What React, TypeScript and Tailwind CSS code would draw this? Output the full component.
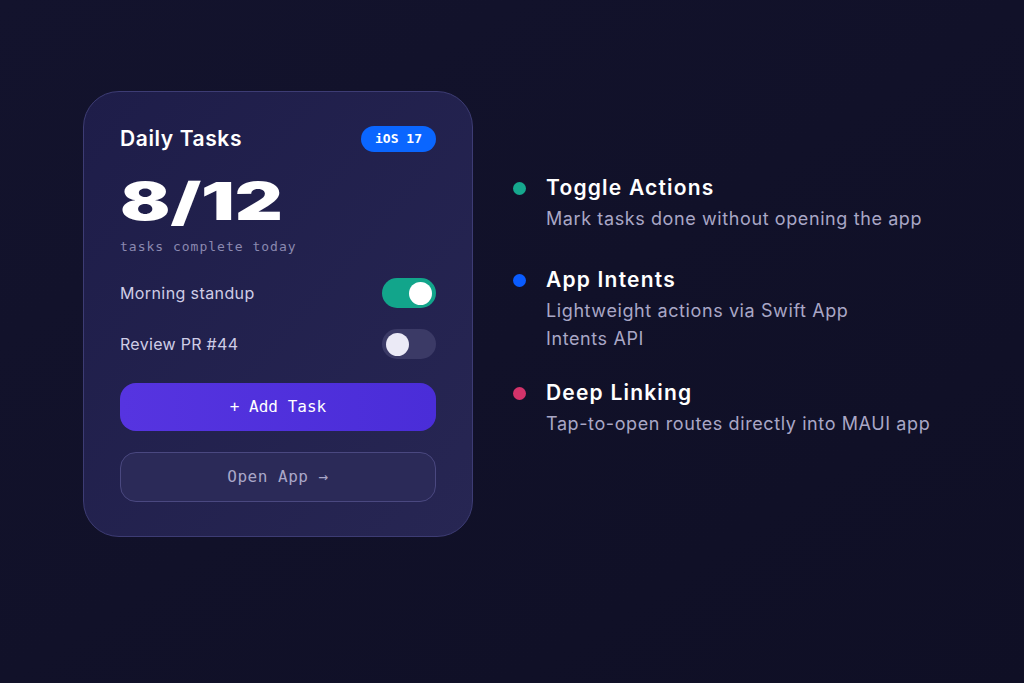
import React from "react";

const sans = "font-['Inter','Lato',sans-serif]";
const mono = "font-['DejaVu_Sans_Mono','Liberation_Mono',monospace]";

function Toggle({ on }: { on: boolean }) {
  return (
    <div
      className={`flex h-[30px] w-[54px] items-center rounded-full px-[4px] ${
        on ? "justify-end bg-[#12a58b]" : "justify-start bg-[#3b3a66]"
      }`}
    >
      <div className={`h-[23px] w-[23px] rounded-full ${on ? "bg-white" : "bg-[#ebeaf6]"}`} />
    </div>
  );
}

function Feature({
  color,
  title,
  children,
}: {
  color: string;
  title: string;
  children: React.ReactNode;
}) {
  return (
    <div className="flex flex-col">
      <div className="flex h-[30px] items-center gap-[20px]">
        <div className={`h-[13px] w-[13px] rounded-full ${color}`} />
        <div className={`${sans} text-[21px] font-semibold leading-[30px] tracking-[1.2px] text-white`}>{title}</div>
      </div>
      <div className={`${sans} mt-[2px] pl-[33px] text-[18px] leading-[28px] tracking-[0.6px] text-[#a9a7c6]`}>
        {children}
      </div>
    </div>
  );
}

export default function App() {
  return (
    <div className="flex h-[683px] w-[1024px] items-start bg-gradient-to-br from-[#13132d] to-[#0f0f25] pl-[83px] pt-[91px]">
      <div className="flex w-[390px] flex-col rounded-[36px] border border-[#3d3c74] bg-gradient-to-br from-[#1e1d49] to-[#272653] px-[36px] pb-[34px] pt-[31px]">
        <div className="flex items-center justify-between">
          <div className={`${sans} text-[21px] font-semibold tracking-[0.6px] text-white`}>Daily Tasks</div>
          <div className={`${mono} flex h-[26px] w-[75px] items-center justify-center rounded-full bg-[#0a66ff] text-[13px] font-bold text-white`}>
            iOS 17
          </div>
        </div>
        <div className="mt-[19px] h-[56px]">
          <div className={`${sans} origin-left scale-x-[1.43] text-[52px] font-black leading-[56px] text-white`}>8/12</div>
        </div>
        <div className={`${mono} mt-[7px] text-[13px] tracking-[1px] text-[#8b89b0]`}>tasks complete today</div>
        <div className="mt-[22px] flex items-center justify-between">
          <div className={`${sans} text-[16px] tracking-[0.4px] text-[#cfcde6]`}>Morning standup</div>
          <Toggle on />
        </div>
        <div className="mt-[21px] flex items-center justify-between">
          <div className={`${sans} text-[16px] tracking-[0.3px] text-[#cfcde6]`}>Review PR #44</div>
          <Toggle on={false} />
        </div>
        <div className={`${mono} mt-[24px] flex h-[48px] items-center justify-center rounded-[16px] bg-gradient-to-r from-[#5634e0] to-[#4a2dd8] text-[16px] text-white`}>
          + Add Task
        </div>
        <div className={`${mono} mt-[21px] flex h-[50px] items-center justify-center rounded-[16px] border border-[#4a4880] bg-[#2b2a58] text-[16px] tracking-[0.5px] text-[#a9a7c8]`}>
          Open App →
        </div>
      </div>
      <div className="ml-[40px] mt-[82px] flex flex-col">
        <Feature color="bg-[#16a88e]" title="Toggle Actions">
          Mark tasks done without opening the app
        </Feature>
        <div className="mt-[32px]">
          <Feature color="bg-[#0a5cff]" title="App Intents">
            Lightweight actions via Swift App
            <br />
            Intents API
          </Feature>
        </div>
        <div className="mt-[25px]">
          <Feature color="bg-[#d3336a]" title="Deep Linking">
            Tap-to-open routes directly into MAUI app
          </Feature>
        </div>
      </div>
    </div>
  );
}
